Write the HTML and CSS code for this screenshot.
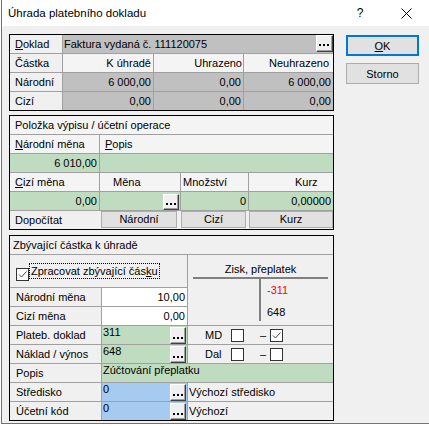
FILE: index.html
```html
<!DOCTYPE html>
<html lang="cs">
<head>
<meta charset="utf-8">
<title>Úhrada platebního dokladu</title>
<link rel="stylesheet" href="styles.css">
</head>
<body>
<div class="window">
  <div class="titlebar">
    <span class="title">Úhrada platebního dokladu</span>
    <div class="caps">
      <span class="cap help">?</span>
      <span class="cap close"><svg width="11" height="11" viewBox="0 0 11 11"><path d="M0.5 0.5L10.5 10.5M10.5 0.5L0.5 10.5" stroke="#000" stroke-width="1" fill="none"/></svg></span>
    </div>
  </div>
  <div class="client">
    <div class="main">
      <div class="box s1">
        <div class="c lbl"><u>D</u>oklad</div>
        <div class="c gray span3 doc"><span>Faktura vydaná č. 111120075</span><span class="eb eb17"><svg width="15" height="15" viewBox="0 0 15 15"><rect x="2" y="8" width="2" height="2"/><rect x="6" y="8" width="2" height="2"/><rect x="10" y="8" width="2" height="2"/></svg></span></div>
        <div class="c lbl">Částka</div>
        <div class="c hdr r">K úhradě</div>
        <div class="c hdr r pr1">Uhrazeno</div>
        <div class="c hdr r pr4">Neuhrazeno</div>
        <div class="c lbl">Národní</div>
        <div class="c gray r">6 000,00</div>
        <div class="c gray r">0,00</div>
        <div class="c gray r">6 000,00</div>
        <div class="c lbl">Cizí</div>
        <div class="c gray r">0,00</div>
        <div class="c gray r">0,00</div>
        <div class="c gray r">0,00</div>
      </div>

      <div class="box s2">
        <div class="c lbl span4 hdr">Položka výpisu / účetní operace</div>
        <div class="c lbl hdr"><u>N</u>árodní měna</div>
        <div class="c lbl span3 hdr"><u>P</u>opis</div>
        <div class="c green r">6 010,00</div>
        <div class="c green span3"></div>
        <div class="c lbl hdr"><u>C</u>izí měna</div>
        <div class="c hdr pl13">Měna</div>
        <div class="c hdr pl2">Množství</div>
        <div class="c hdr pl46">Kurz</div>
        <div class="c green r">0,00</div>
        <div class="c green inpbtn"><span class="eb"><svg width="14" height="14" viewBox="0 0 14 14"><rect x="2" y="8" width="2" height="2"/><rect x="6" y="8" width="2" height="2"/><rect x="10" y="8" width="2" height="2"/></svg></span></div>
        <div class="c green r">0</div>
        <div class="c green r">0,00000</div>
        <div class="c span4 dop">
          <span class="dop-lbl">Dopočítat</span>
          <button class="wbtn w76">Národní</button>
          <button class="wbtn w65">Cizí</button>
          <button class="wbtn w84">Kurz</button>
        </div>
      </div>

      <div class="box s3">
        <div class="c span3 t3">Zbývající částka k úhradě</div>
        <div class="c span2 chk">
          <span class="cb"><svg width="11" height="11" viewBox="0 0 11 11"><path d="M2 5.5L4.5 8L9.5 2.5" stroke="#4a4a4a" stroke-width="1" fill="none"/></svg></span>
          <span class="focus">Zpracovat zbývající čás<u>k</u>u</span>
        </div>
        <div class="zisk">
          <div class="zisk-title">Zisk, přeplatek</div>
          <div class="zisk-bar"></div>
          <div class="zisk-body">
            <div class="zisk-vline"></div>
            <div class="zisk-vals"><div class="red">-311</div><div>648</div></div>
          </div>
        </div>
        <div class="c lbl3">Národní měna</div>
        <div class="c white r">10,00</div>
        <div class="c lbl3">Cizí měna</div>
        <div class="c white r">0,00</div>

        <div class="c lbl3">Plateb. doklad</div>
        <div class="c green inp"><span>311</span><span class="eb eb3"><svg width="14" height="15" viewBox="0 0 14 15"><rect x="2" y="9" width="2" height="2"/><rect x="6" y="9" width="2" height="2"/><rect x="10" y="9" width="2" height="2"/></svg></span></div>
        <div class="c mddal"><span class="md-l">MD</span><span class="cb"></span><span class="dash">–</span><span class="cb"><svg width="11" height="11" viewBox="0 0 11 11"><path d="M2 5.5L4.5 8L9.5 2.5" stroke="#4a4a4a" stroke-width="1" fill="none"/></svg></span></div>

        <div class="c lbl3">Náklad / výnos</div>
        <div class="c green inp"><span>648</span><span class="eb eb3"><svg width="14" height="15" viewBox="0 0 14 15"><rect x="2" y="9" width="2" height="2"/><rect x="6" y="9" width="2" height="2"/><rect x="10" y="9" width="2" height="2"/></svg></span></div>
        <div class="c mddal"><span class="md-l">Dal</span><span class="cb"></span><span class="dash">–</span><span class="cb"></span></div>

        <div class="c lbl3">Popis</div>
        <div class="c green inp span2">Zúčtování přeplatku</div>

        <div class="c lbl3">Středisko</div>
        <div class="c blue inp"><span>0</span><span class="eb eb3"><svg width="14" height="15" viewBox="0 0 14 15"><rect x="2" y="9" width="2" height="2"/><rect x="6" y="9" width="2" height="2"/><rect x="10" y="9" width="2" height="2"/></svg></span></div>
        <div class="c txt">Výchozí středisko</div>

        <div class="c lbl3">Účetní kód</div>
        <div class="c blue inp"><span>0</span><span class="eb eb3"><svg width="14" height="15" viewBox="0 0 14 15"><rect x="2" y="9" width="2" height="2"/><rect x="6" y="9" width="2" height="2"/><rect x="10" y="9" width="2" height="2"/></svg></span></div>
        <div class="c txt">Výchozí</div>
      </div>
    </div>
    <div class="side">
      <button class="btn default"><u>O</u>K</button>
      <button class="btn">Storno</button>
    </div>
  </div>
</div>
</body>
</html>
```

FILE: styles.css
```css
body {
  margin: 0;
  background: #ffffff;
  font-family: "Liberation Sans", Arial, sans-serif;
  font-size: 11px;
  color: #000;
}
.window {
  margin-left: 1px;
  width: 428px;
  height: 423px;
  border-left: 1px solid #2b84d8;
  border-bottom: 1px solid #2b84d8;
  background: #f0f0f0;
}
.titlebar {
  height: 26px;
  background: #ffffff;
  display: flex;
  align-items: center;
}
.title {
  padding-left: 6px;
  font-size: 11.5px;
}
.caps {
  margin-left: auto;
  display: flex;
  margin-right: 1px;
}
.cap {
  width: 46px;
  height: 26px;
  display: flex;
  align-items: center;
  justify-content: center;
}
.help {
  font-size: 12px;
}
.close svg { display: block; }
.client {
  display: flex;
  padding: 8px 0 0 7px;
}
.main {
  width: 325px;
  display: flex;
  flex-direction: column;
}
.box {
  box-sizing: border-box;
  width: 325px;
  border: 1px solid #000;
  background: #a0a0a0;
  display: grid;
  gap: 1px;
}
.s1 {
  grid-template-columns: 52px 90px 89px 89px;
  grid-template-rows: repeat(4, 18px);
}
.s2 {
  margin-top: 4px;
  grid-template-columns: 89px 80px 67px 84px;
  grid-template-rows: repeat(6, 18px);
}
.s3 {
  margin-top: 5px;
  grid-template-columns: 91px 85px 145px;
  grid-template-rows: 18px 32px repeat(7, 18px);
}
.c {
  display: flex;
  align-items: center;
  background: #f0f0f0;
  white-space: nowrap;
  overflow: hidden;
  min-width: 0;
  line-height: 13px;
}
.hdr { background: #f4f4f4; }
.r { justify-content: flex-end; padding-right: 2px; }
.pr1 { padding-right: 1px; }
.pr4 { padding-right: 4px; }
.pl13 { padding-left: 13px; }
.pl2 { padding-left: 2px; }
.pl46 { padding-left: 46px; }
.lbl { padding-left: 5px; }
.lbl3 { padding-left: 6px; }
.t3 { padding-left: 3px; }
.gray { background: #c0c0c0; }
.green { background: #c0dcc0; }
.blue { background: #a6caf0; }
.white { background: #ffffff; }
.span2 { grid-column: span 2; }
.span3 { grid-column: span 3; }
.span4 { grid-column: span 4; }
.doc {
  padding-left: 1px;
  justify-content: space-between;
}
.doc .eb { align-self: flex-start; }
.eb {
  box-sizing: border-box;
  width: 16px;
  height: 16px;
  flex-shrink: 0;
  background: #f0f0f0;
  border: 1px solid;
  border-color: #ffffff #404040 #404040 #ffffff;
  box-shadow: inset -1px -1px 0 #a0a0a0;
  display: flex;
}
.eb svg { display: block; fill: #000; }
.eb17 { width: 17px; height: 17px; }
.eb3 { height: 17px; margin-top: 1px; margin-right: 1px; }
.inpbtn {
  justify-content: flex-end;
  align-items: flex-end;
  padding-right: 1px;
}
.dop {
  align-items: flex-start;
}
.dop-lbl {
  box-sizing: border-box;
  width: 91px;
  padding-left: 5px;
  align-self: center;
}
.wbtn {
  box-sizing: border-box;
  height: 17px;
  margin: 0;
  padding: 0;
  background: #e1e1e1;
  border: 1px solid #adadad;
  font: inherit;
  color: #000;
  line-height: 13px;
}
.w76 { width: 76px; }
.w65 { width: 65px; margin-left: 4px; }
.w84 { width: 84px; margin-left: 3px; }
.inp {
  align-items: flex-start;
  justify-content: space-between;
  padding-left: 1px;
}
.chk {
  align-items: flex-start;
  padding-left: 6px;
}
.cb {
  box-sizing: border-box;
  width: 13px;
  height: 13px;
  flex-shrink: 0;
  border: 1px solid #333;
  background: #fff;
  display: block;
}
.cb svg { display: block; }
.chk .cb { margin-top: 13px; }
.focus {
  margin-top: 8px;
  border: 1px dotted #000;
  padding: 0 1px;
  line-height: 14px;
}
.zisk {
  grid-column: 3;
  grid-row: 2 / 5;
  background: #f0f0f0;
  display: flex;
  flex-direction: column;
}
.zisk-title {
  text-align: center;
  padding-top: 6px;
  line-height: 16px;
}
.zisk-bar {
  height: 2px;
  margin: 0 5px;
  background: #808080;
}
.zisk-body {
  display: flex;
  margin-left: 71px;
}
.zisk-vline {
  width: 2px;
  height: 42px;
  background: #808080;
}
.zisk-vals {
  padding-left: 6px;
  line-height: 22px;
}
.red { color: #ff0000; }
.mddal { padding-left: 17px; }
.md-l { box-sizing: border-box; width: 26px; }
.dash { box-sizing: border-box; width: 26px; padding-left: 16px; }
.txt { padding-left: 1px; }
.side {
  margin-left: 12px;
  padding-top: 1px;
  display: flex;
  flex-direction: column;
  gap: 7px;
}
.btn {
  box-sizing: border-box;
  width: 73px;
  height: 21px;
  margin: 0;
  padding: 0;
  background: #e1e1e1;
  border: 1px solid #adadad;
  font: inherit;
  color: #000;
}
.btn.default { border: 2px solid #0078d7; }
```
